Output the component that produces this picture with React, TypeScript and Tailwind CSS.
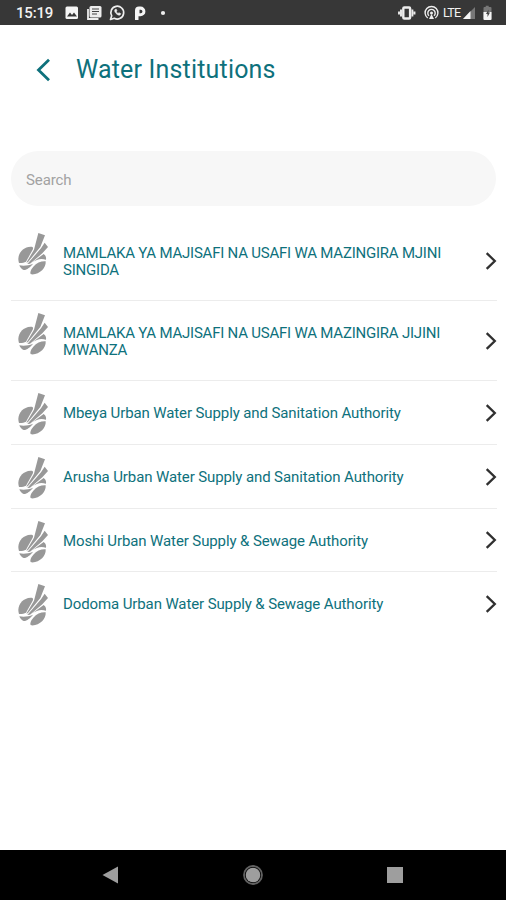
import React from 'react';

type Row = { lines: string[]; tall?: boolean; height: string; spacing: string };

const rows: Row[] = [
  { lines: ['MAMLAKA YA MAJISAFI NA USAFI WA MAZINGIRA MJINI', 'SINGIDA'], tall: true, height: 'h-20', spacing: 'tracking-[-0.22px]' },
  { lines: ['MAMLAKA YA MAJISAFI NA USAFI WA MAZINGIRA JIJINI', 'MWANZA'], tall: true, height: 'h-20', spacing: 'tracking-[-0.22px]' },
  { lines: ['Mbeya Urban Water Supply and Sanitation Authority'], height: 'h-16', spacing: 'tracking-[-0.11px]' },
  { lines: ['Arusha Urban Water Supply and Sanitation Authority'], height: 'h-16', spacing: 'tracking-[-0.11px]' },
  { lines: ['Moshi Urban Water Supply & Sewage Authority'], height: 'h-[63px]', spacing: 'tracking-[-0.11px]' },
  { lines: ['Dodoma Urban Water Supply & Sewage Authority'], height: 'h-16', spacing: 'tracking-[-0.11px]' },
];

function Logo() {
  return (
    <svg className="h-[42px] w-[30px] shrink-0" viewBox="0 0 90 126" fill="#989898">
      <path d="M3 90 C-5 66 12 42 38 41 C44 41 47 43 44 50 L24 86 C18 89 10 91 3 90 Z" />
      <path d="M4 97 C18 99 31 98 45 92 C38 102 25 112 17 111 C11 109 6 103 4 97 Z" />
      <path d="M77 63 C84 68 85 74 84 80 C68 75 56 79 43 88 Z" />
      <path d="M61 0 L81 7 L67 42 L30 87 L25 89 L48 50 Z" />
      <path d="M80 29 L90 42 L73 61 L36 92 L28 93 L69 46 Z" />
      <path d="M83 85 C85 105 64 126 40 124 C34 122 38 110 46 101 C56 89 70 84 83 85 Z" />
    </svg>
  );
}

function StatusBar() {
  return (
    <div className="flex h-[25px] shrink-0 items-center bg-[#373737] pl-4 text-[#f2f2f2]">
      <span className="w-[49px] pt-[2px] text-[15px] font-medium leading-none tracking-[-0.2px]">15:19</span>
      <svg className="h-[25px] w-[110px]" viewBox="65 0 110 25">
        <rect x="65.5" y="6.5" width="12.5" height="12.5" rx="1.5" fill="#f5f5f5" />
        <path d="M67 16.5l3-4 2 2.500 2-2.500 3 4z" fill="#373737" />
        <path d="M88 9v10h10.500" fill="none" stroke="#eee" strokeWidth="1.800" />
        <rect x="89.500" y="6" width="12" height="11.500" rx="1.500" fill="#eee" />
        <path d="M92 9h7M92 11.500h7M92 14h5" stroke="#444" strokeWidth="1.100" />
        <path d="M110.500 19.500l1.200-3.700a6.400 6.400 0 1 1 2.600 2.500z" fill="none" stroke="#eee" strokeWidth="1.700" strokeLinejoin="round" />
        <path d="M115 9.500c-1.500 2 2.500 6.500 5 5.500l.8-1.300-1.800-1-1 .8c-.8-.3-1.400-1-1.700-1.800l.7-.8-.7-1.700z" fill="#eee" stroke="#eee" strokeWidth=".6" />
        <path fillRule="evenodd" d="M135 10.500q0-4 4-4h1.500a4.700 4.700 0 0 1 0 9.800H138.500v3.700H135zM139.500 9.700v3.500h1.200a1.750 1.750 0 0 0 0-3.500z" fill="#f5f5f5" />
        <circle cx="163" cy="13" r="2.100" fill="#eee" />
      </svg>
      <svg className="ml-auto h-[25px] w-[46px]" viewBox="396 0 46 25" fill="none" stroke="#ededed">
        <rect x="403.300" y="7.500" width="6.800" height="11" rx="1" strokeWidth="2.400" />
        <path d="M401 9.500v7M412.400 9.500v7M399 11.500v3M414.500 11.500v3" strokeWidth="1.900" />
        <path d="M427.700 18a6.400 6.400 0 1 1 7.600 0M429 15.800a3.700 3.700 0 1 1 5 0" strokeWidth="1.400" />
        <circle cx="431.500" cy="13" r="1.500" fill="#ededed" stroke="none" />
        <path d="M431.500 14l-2.500 5h5z" fill="#ededed" stroke="none" />
      </svg>
      <span className="w-[20px] pl-px pt-px text-[12.5px] leading-none tracking-[-0.8px]">LTE</span>
      <svg className="h-[25px] w-[44px]" viewBox="462 0 44 25">
        <path d="M463 19L475 7v12z" fill="#777" />
        <path d="M463 19l7.500-8V19z" fill="#f5f5f5" />
        <path d="M484.500 7h1.200V5.700h3V7h1.800q1 0 1 1v11q0 1-1 1h-6q-1 0-1-1V8q0-1 1-1z" fill="#777" />
        <path d="M483.500 12h8v7q0 1-1 1h-6q-1 0-1-1z" fill="#f5f5f5" />
        <path d="M488.500 9.500l-2.500 4.500h1.500v3l2.500-4.500h-1.500z" fill="#444" />
      </svg>
    </div>
  );
}

export default function App() {
  return (
    <div className="flex h-[900px] w-[506px] flex-col overflow-hidden bg-white font-['Roboto',sans-serif]">
      <StatusBar />
      <header className="flex h-[126px] shrink-0 items-start pl-9 pt-[28px] text-[#0e717c]">
        <svg className="mt-[5px] h-6 w-[40px]" viewBox="0 0 40 24" fill="none" stroke="currentColor" strokeWidth="2.800">
          <path d="M13 1.800L2.500 12l10.500 10.200" />
        </svg>
        <h1 className="whitespace-nowrap pt-px text-[25px] font-normal leading-8 tracking-[0.18px]">Water Institutions</h1>
      </header>
      <div className="ml-[11px] mr-[10px] flex h-[55px] shrink-0 items-center rounded-full bg-[#f7f7f7] pl-[15px] pt-[3px] text-[15px] tracking-[-0.1px] text-[#a2a2a2]">
        Search
      </div>
      <main className="mt-[15px] flex-1 pl-[11px] pr-[9px]">
        {rows.map((row, i) => (
          <div
            key={row.lines[0]}
            className={`flex items-start border-b pl-[7px] ${row.height} ${i < rows.length - 1 ? 'border-[#ececec]' : 'border-transparent'}`}
          >
            <div className="mt-[12px] flex">
              <Logo />
            </div>
            <div
              className={`ml-[15px] mt-[24px] flex-1 whitespace-nowrap text-[15px] leading-[17px] text-[#0e717c] ${row.spacing}`}
            >
              {row.lines.map((l) => (
                <div key={l}>{l}</div>
              ))}
            </div>
            <svg className={`h-[18px] w-[12px] ${row.tall ? 'mt-[31px]' : i === 4 ? 'mt-[22px]' : 'mt-[23px]'}`} viewBox="0 0 12 18" fill="none" stroke="#303030" strokeWidth="2.300">
              <path d="M1.700 1.200L9.800 9l-8.100 7.800" />
            </svg>
          </div>
        ))}
      </main>
      <nav className="flex h-[50px] shrink-0 items-center bg-black">
        <svg className="h-[50px] w-[506px]" viewBox="0 850 506 50" fill="#9e9e9e">
          <path d="M102.500 875l15.500-8.500v17z" />
          <circle cx="253" cy="875" r="9" fill="none" stroke="#626262" strokeWidth="1.800" />
          <circle cx="253" cy="875" r="7.300" />
          <rect x="387" y="867" width="16" height="16" />
        </svg>
      </nav>
    </div>
  );
}
